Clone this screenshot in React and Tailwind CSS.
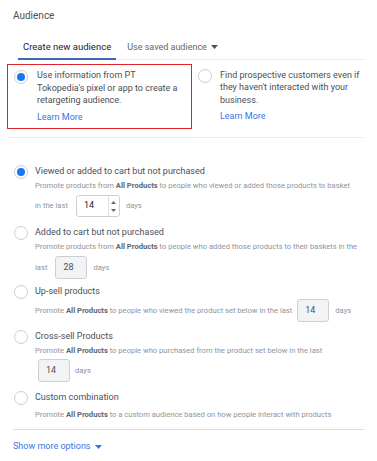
import React from "react";

const font = { fontFamily: "Roboto, 'Liberation Sans', sans-serif" };

function Radio({ checked }) {
  return (
    <div className="w-[14px] h-[14px] rounded-full border border-[#ccd0d5] bg-white flex items-center justify-center shrink-0">
      {checked && <div className="w-[8px] h-[8px] rounded-full bg-[#1877f2]" />}
    </div>
  );
}

function Caret() {
  return (
    <svg width="7" height="4" viewBox="0 0 7 4" className="inline-block">
      <path d="M0 0 L7 0 L3.5 4 Z" fill="currentColor" />
    </svg>
  );
}

function Spin() {
  return (
    <div className="w-[44px] h-[22px] border border-[#ccd0d5] rounded-[3px] bg-white flex items-stretch">
      <div className="flex-1 pl-[7px] flex items-center text-[9px] text-[#1d2129]">14</div>
      <div className="w-[11px] border-l border-[#dddfe2] flex flex-col items-center justify-center gap-[5px]">
        <svg width="5" height="3" viewBox="0 0 5 3"><path d="M0 3 L5 3 L2.5 0 Z" fill="#606770" /></svg>
        <svg width="5" height="3" viewBox="0 0 5 3"><path d="M0 0 L5 0 L2.5 3 Z" fill="#606770" /></svg>
      </div>
    </div>
  );
}

function Disabled({ value }) {
  return (
    <div className="w-[32px] h-[23px] border border-[#ccd0d5] rounded-[3px] bg-[#f2f3f5] flex items-center pl-[7px] text-[9px] text-[#4b4f56]">
      {value}
    </div>
  );
}

function Option({ checked, title, children, className = "" }) {
  return (
    <div className={"flex " + className}>
      <div className="w-[22px] pl-[1px] h-[14px] flex items-center">
        <Radio checked={checked} />
      </div>
      <div className="flex-1">
        <div className="h-[14px] flex items-center text-[9px] text-[#4b4f56]">{title}</div>
        {children}
      </div>
    </div>
  );
}

const B = ({ children }) => <span className="font-bold text-[#606770]">{children}</span>;

export default function App() {
  return (
    <div style={font} className="w-[377px] h-[461px] bg-white overflow-hidden px-[13px] pt-[9px] relative">
      <div className="text-[10px] text-[#4b4f56] h-[13px] flex items-center">Audience</div>

      <div className="ml-[5px] mt-[14px] flex border-b border-[#e9ebee] h-[24px]">
        <div className="px-[5px] border-b-2 border-[#4267b2] flex items-center text-[9.5px] text-[#1d2129] -mb-px">
          Create new audience
        </div>
        <div className="ml-[6px] px-[5px] flex items-center gap-[4px] text-[9px] text-[#606770]">
          Use saved audience <span className="text-[#4b4f56]"><Caret /></span>
        </div>
      </div>

      <div className="-ml-[6px] mt-[4px] flex border-b border-[#e9ebee] pb-[8px]">
        <div className="w-[185px] h-[65px] border-[1.5px] border-[#e0242b] pl-[6px] pt-[4px] flex shrink-0">
          <div className="w-[23px] pt-[1px]"><Radio checked /></div>
          <div className="w-[146px] text-[9px] leading-[12.5px] text-[#4b4f56]">
            Use information from PT Tokopedia's pixel or app to create a retargeting audience.
            <div className="mt-[4px] text-[#3578e5]">Learn More</div>
          </div>
        </div>
        <div className="pl-[5px] pt-[4px] flex">
          <div className="w-[23px] pt-[1px] pl-[0.5px]"><Radio /></div>
          <div className="w-[150px] text-[9px] leading-[12.5px] text-[#4b4f56] pt-[0.5px]">
            Find prospective customers even if they haven't interacted with your business.
            <div className="mt-[4px] text-[#3578e5]">Learn More</div>
          </div>
        </div>
      </div>

      <div className="mt-[27px] text-[7.6px] text-[#90949c]">
        <Option checked title="Viewed or added to cart but not purchased">
          <div className="h-[14px] flex items-center whitespace-nowrap">
            Promote products from&nbsp;<B>All Products</B>&nbsp;to people who viewed or added those products to basket
          </div>
          <div className="mt-[2px] flex items-center gap-[8px]">
            <span>in the last</span>
            <Spin />
            <span className="ml-[-2px]">days</span>
          </div>
        </Option>

        <Option title="Added to cart but not purchased" className="mt-[9px]">
          <div className="h-[14px] flex items-center whitespace-nowrap">
            Promote products from&nbsp;<B>All Products</B>&nbsp;to people who added those products to their baskets in the
          </div>
          <div className="mt-[2px] flex items-center gap-[6px]">
            <span className="mr-[2px]">last</span>
            <Disabled value="28" />
            <span>days</span>
          </div>
        </Option>

        <Option title="Up-sell products" className="mt-[6px]">
          <div className="h-[23px] flex items-center whitespace-nowrap">
            Promote&nbsp;<B>All Products</B>&nbsp;to people who viewed the product set below in the last
            <span className="ml-[5px] mr-[6px]"><Disabled value="14" /></span>
            days
          </div>
        </Option>

        <Option title="Cross-sell Products" className="mt-[8px]">
          <div className="h-[14px] flex items-center whitespace-nowrap">
            Promote&nbsp;<B>All Products</B>&nbsp;to people who purchased from the product set below in the last
          </div>
          <div className="mt-[1px] ml-[3px] flex items-center gap-[5px]">
            <Disabled value="14" />
            <span>days</span>
          </div>
        </Option>

        <Option title="Custom combination" className="mt-[9px]">
          <div className="mt-[3px] h-[14px] flex items-center whitespace-nowrap">
            Promote&nbsp;<B>All Products</B>&nbsp;to a custom audience based on how people interact with products
          </div>
        </Option>
      </div>

      <div className="mt-[7px] h-px bg-[#dadde1]" />
      <div className="mt-[10px] flex items-center gap-[4px] text-[9px] text-[#3578e5]">
        Show more options <Caret />
      </div>
    </div>
  );
}
